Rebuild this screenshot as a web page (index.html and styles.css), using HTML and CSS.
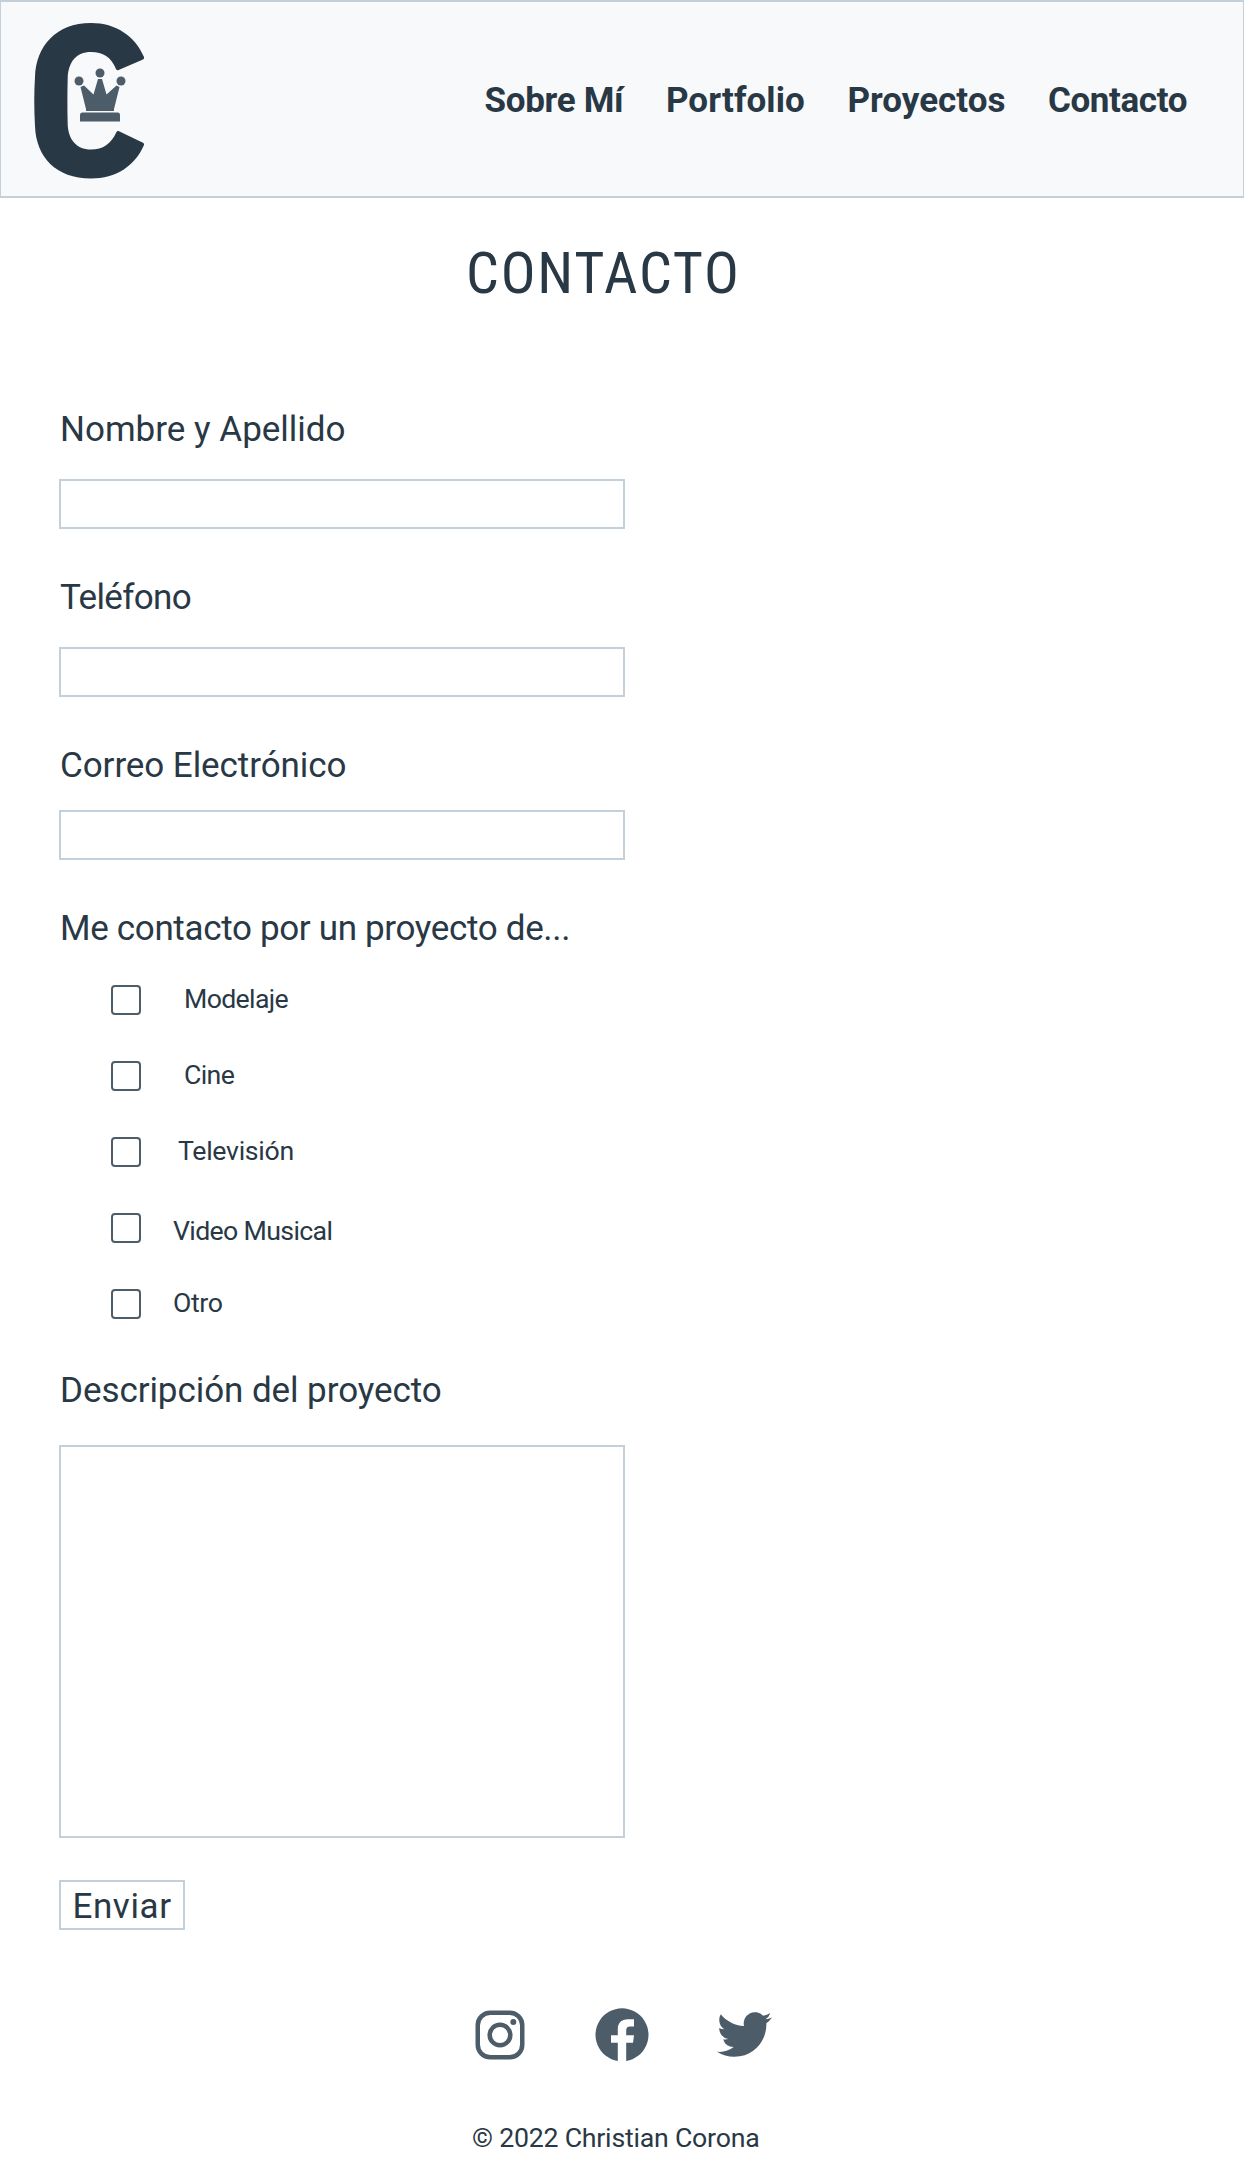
FILE: index.html
```html
<!DOCTYPE html>
<html lang="es">
<head>
<meta charset="utf-8">
<title>Contacto - Christian Corona</title>
<link rel="stylesheet" href="styles.css">
</head>
<body>
<header class="header">
  <a class="logo" href="#" aria-label="Inicio">
    <svg width="112" height="158" viewBox="33 22 112 158">
      <path class="logo-ring" d="M144 57C135 36 116 23 91 23C56 23 36 46 35 77C34 92 34 109 35 126C36 157 56 178.500 91 178.500C116 178.500 135 166 144 145q.5-1.500-1-2.300L118.500 131q-1.200-.5-2 1C111 144 103 149.500 91 149.500C76 149.500 68.500 139 67.700 125C67.300 108 67.300 93 67.700 78C68.500 62 76 52 91 52C103 52 111 57 116 69q.8 1.700 2 1.200L143 59.500q1.500-.8 1-2.500z"/>
      <g class="logo-crown">
        <circle cx="79" cy="81" r="4.500"/><circle cx="100" cy="73" r="4.500"/><circle cx="121" cy="81" r="4.500"/>
        <path d="M80.500 87L84 85.500L93.500 94.500L98 79H102L106.500 94.500L116.500 85.500L119.500 87L114 109V111H86V109z"/>
        <path d="M80 121.500V115q0-2.500 2.500-2.500h35q2.500 0 2.500 2.500v6.500z"/>
      </g>
    </svg>
  </a>
  <nav class="nav">
    <a class="nav-about" href="#">Sobre Mí</a>
    <a class="nav-portfolio" href="#">Portfolio</a>
    <a class="nav-projects" href="#">Proyectos</a>
    <a class="nav-contact" href="#">Contacto</a>
  </nav>
</header>
<main>
  <h1 class="title">CONTACTO</h1>
  <form class="form">
    <label class="label" for="nombre">Nombre y Apellido</label>
    <input class="input" id="nombre" type="text">
    <label class="label label-phone" for="telefono">Teléfono</label>
    <input class="input" id="telefono" type="tel">
    <label class="label label-mail" for="correo">Correo Electrónico</label>
    <input class="input input-mail" id="correo" type="email">
    <p class="label label-topic">Me contacto por un proyecto de...</p>
    <div class="options">
      <label class="option"><input class="check" type="checkbox"><span class="option-text">Modelaje</span></label>
      <label class="option"><input class="check" type="checkbox"><span class="option-text">Cine</span></label>
      <label class="option option-tv"><input class="check" type="checkbox"><span class="option-text">Televisión</span></label>
      <label class="option option-video"><input class="check" type="checkbox"><span class="option-text">Video Musical</span></label>
      <label class="option option-other"><input class="check" type="checkbox"><span class="option-text">Otro</span></label>
    </div>
    <label class="label label-description" for="descripcion">Descripción del proyecto</label>
    <textarea class="input textarea" id="descripcion"></textarea>
    <button class="button" type="button">Enviar</button>
  </form>
</main>
<footer class="footer">
  <div class="social">
    <a href="#" aria-label="Instagram"><svg width="50" height="50" viewBox="0 0 50 50" fill="none" stroke="currentColor" stroke-width="4.500"><rect x="2.750" y="2.750" width="44.500" height="44.500" rx="12.500"/><circle cx="25" cy="25" r="10.300"/><circle cx="38.300" cy="12" r="3" fill="currentColor" stroke="none"/></svg></a>
    <a class="social-facebook" href="#" aria-label="Facebook"><svg width="54" height="54" viewBox="0 0 54 54" fill="currentColor"><path d="M22.800 53A26.500 26.500 0 1 1 31.200 53V34.800H38L39 27.200H31.200V22.500C31.200 19.800 32.500 18.500 35 18.500H39V11.300H33C26.500 11.300 22.800 15 22.800 21V27.200H16V34.800H22.800z"/></svg></a>
    <a href="#" aria-label="Twitter"><svg width="55" height="55" viewBox="0 0 24 24" fill="currentColor"><path d="M23.953 4.570a10 10 0 01-2.825.775 4.958 4.958 0 002.163-2.723c-.951.555-2.005.959-3.127 1.184a4.920 4.920 0 00-8.384 4.482C7.690 8.095 4.067 6.130 1.640 3.162a4.822 4.822 0 00-.666 2.475c0 1.710.87 3.213 2.188 4.096a4.904 4.904 0 01-2.228-.616v.06a4.923 4.923 0 003.946 4.827 4.996 4.996 0 01-2.212.085 4.936 4.936 0 004.604 3.417 9.867 9.867 0 01-6.102 2.105c-.39 0-.779-.023-1.170-.067a13.995 13.995 0 007.557 2.209c9.053 0 13.998-7.496 13.998-13.985 0-.21 0-.42-.015-.63A9.935 9.935 0 0024 4.590z"/></svg></a>
  </div>
  <p class="copyright">© 2022 Christian Corona</p>
</footer>
</body>
</html>
```
FILE: styles.css
```css
* { box-sizing: border-box; }

body {
  margin: 0;
  background: #fff;
  color: #293845;
  font-family: Roboto, sans-serif;
}

a { color: inherit; text-decoration: none; }
svg { display: block; }
p { margin: 0; }

/* Header */
.header {
  display: flex;
  justify-content: space-between;
  height: 198px;
  padding: 20px 56px 0 32px;
  border: solid #c3cfd9;
  border-width: 2px 1px;
  background: #f8f9fb;
}
.logo-ring { fill: #293845; }
.logo-crown { fill: #4d5c69; }
.nav {
  display: flex;
  gap: 42.5px;
  padding-top: 59px;
  font-size: 35px;
  font-weight: 700;
  line-height: 40px;
}
.nav-about { letter-spacing: -.3px; }
.nav-contact { letter-spacing: -.4px; }
.nav-portfolio { letter-spacing: .1px; }

/* Contact form */
.title {
  margin: 40px 0 0;
  padding-left: 466px;
  font-family: "Roboto Condensed", Roboto, sans-serif;
  font-size: 58px;
  font-stretch: 75%;
  font-weight: 400;
  line-height: 70px;
  letter-spacing: 1.8px;
}
.form {
  display: flex;
  flex-direction: column;
  align-items: flex-start;
  width: 566px;
  margin: 101px 0 0 59px;
}
.label {
  padding-left: 1px;
  font-size: 35px;
  line-height: 42px;
}
.label-phone { letter-spacing: -.65px; }
.label-mail,
.label-description { letter-spacing: -.07px; }
.input {
  width: 566px;
  height: 50px;
  margin: 28px 0 48px;
  padding: 0 12px;
  border: 2px solid #c3cfd9;
  border-radius: 0;
  background: #fff;
  color: inherit;
  font: inherit;
  font-size: 26.7px;
  outline: none;
  resize: none;
}
.input-mail { margin-top: 23px; }
.label-topic { letter-spacing: -.34px; }
.options {
  display: flex;
  flex-direction: column;
  gap: 46px;
  margin: 35px 0 51px 52px;
}
.option {
  display: flex;
  align-items: flex-start;
  gap: 43px;
  height: 30px;
  font-size: 26.7px;
  line-height: 30px;
  letter-spacing: -.65px;
}
.option-text { margin-top: -1px; }
.option-tv { gap: 37px; letter-spacing: -.3px; }
.option-video { gap: 32px; }
.option-video .option-text { margin-top: 3px; }
.option-other { gap: 32px; letter-spacing: -.4px; }
.check {
  appearance: none;
  width: 30px;
  height: 30px;
  margin: 0;
  border: 2px solid #4d5c69;
  border-radius: 4px;
  background: #fff;
}
.textarea {
  height: 393px;
  margin: 33px 0 42px;
}
.button {
  width: 126px;
  height: 50px;
  padding: 4px 0 0;
  border: 2px solid #c3cfd9;
  background: #fff;
  color: inherit;
  font: inherit;
  font-size: 35px;
  line-height: 40px;
  letter-spacing: .6px;
}

/* Footer */
.social {
  display: flex;
  align-items: center;
  gap: 69px;
  margin: 77px 0 0 475px;
  color: #4d5c69;
}
.social-facebook { margin: 1px -1px 0 1px; }
.copyright {
  margin: 61px 0 32px 472px;
  font-size: 26.7px;
  line-height: 30px;
  letter-spacing: -.22px;
}
```
